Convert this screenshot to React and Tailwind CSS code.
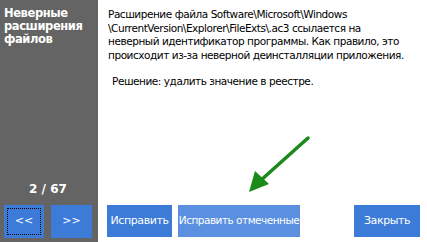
export default function App() {
  const font = { fontFamily: '"DejaVu Sans", Verdana, sans-serif' };
  return (
    <div className="w-[427px] h-[242px] flex bg-white overflow-hidden" style={font}>
      <div className="w-[98px] h-full bg-[#646464] flex flex-col justify-between">
        <div className="pl-[4px] pt-[7px] text-white font-bold text-[11.5px] leading-[13px] tracking-[-0.4px]">
          Неверные<br />расширения<br />файлов
        </div>
        <div className="flex flex-col">
          <div className="text-center text-white font-bold text-[12px] leading-[14px] pr-[2px]">2 / 67</div>
          <div className="flex gap-[7px] pl-[4px] pt-[9px] pb-[4px]">
            <div className="w-[40px] h-[33px] bg-[#3c7bd8] p-[3px]">
              <div className="w-full h-full border border-dotted border-black flex items-center justify-center text-white text-[11px]">&lt;&lt;</div>
            </div>
            <div className="w-[41px] h-[33px] bg-[#3c7bd8] flex items-center justify-center text-white text-[11px]">&gt;&gt;</div>
          </div>
        </div>
      </div>
      <div className="flex-1 relative flex flex-col justify-between">
        <div className="pl-[10px] pt-[8px] text-[10.5px] leading-[13.5px] text-black tracking-[-0.45px] whitespace-nowrap">
          <div>Расширение файла Software\Microsoft\Windows<br />\CurrentVersion\Explorer\FileExts\.ac3 ссылается на<br />неверный идентификатор программы. Как правило, это<br />происходит из-за неверной деинсталляции приложения.</div>
          <div className="mt-[13px] pl-[4px]">Решение: удалить значение в реестре.</div>
        </div>
        <svg className="absolute left-[140px] top-[132px]" width="80" height="66" viewBox="0 0 80 66">
          <line x1="70" y1="6" x2="22" y2="49" stroke="#1a8a1a" strokeWidth="3.5" strokeLinecap="round" />
          <polygon points="11,60 17,39 31,52" fill="#1a8a1a" />
        </svg>
        <div className="flex items-center pl-[9px] pb-[5px] text-white text-[11px] tracking-[-0.4px] whitespace-nowrap">
          <div className="w-[65px] h-[32px] bg-[#3c7bd8] flex items-center justify-center">Исправить</div>
          <div className="ml-[6px] w-[122px] h-[32px] bg-[#5b90e0] flex items-center justify-center text-[10.5px] tracking-[-0.5px]">Исправить отмеченные</div>
          <div className="ml-[54px] w-[66px] h-[32px] bg-[#3c7bd8] flex items-center justify-center">Закрыть</div>
        </div>
      </div>
    </div>
  );
}
